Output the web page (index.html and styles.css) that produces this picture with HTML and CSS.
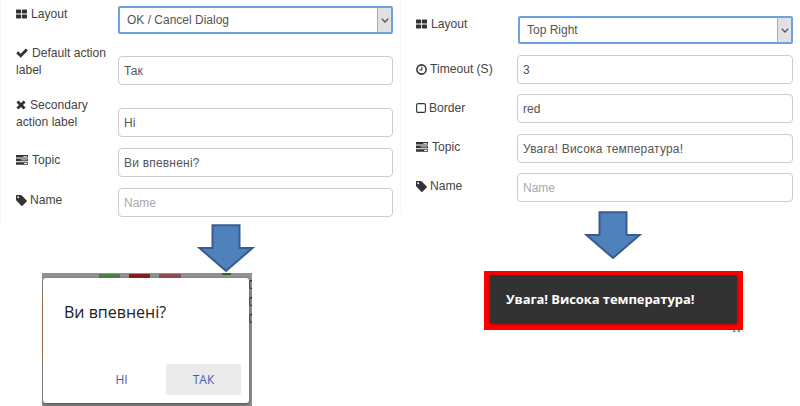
FILE: index.html
```html
<!DOCTYPE html>
<html lang="uk">
<head>
<meta charset="utf-8">
<title>Notification settings</title>
<link rel="stylesheet" href="styles.css">
</head>
<body>
<svg class="defs" aria-hidden="true">
  <symbol id="grid" viewBox="0 0 11 9"><path d="M0 .7Q0 0 .7 0H4.4Q5.1 0 5.1.7V3.4Q5.1 4.1 4.4 4.1H.7Q0 4.1 0 3.4ZM5.9.7Q5.9 0 6.6 0H10.3Q11 0 11 .7V3.4Q11 4.1 10.3 4.1H6.6Q5.9 4.1 5.9 3.4ZM0 5.6Q0 4.9.7 4.9H4.4Q5.1 4.9 5.1 5.6V8.3Q5.1 9 4.4 9H.7Q0 9 0 8.3ZM5.9 5.6Q5.9 4.9 6.6 4.9H10.3Q11 4.9 11 5.6V8.3Q11 9 10.3 9H6.6Q5.9 9 5.9 8.3Z"/></symbol>
  <symbol id="check" viewBox="0 0 11 9"><path d="M.2 4.7 2 2.9 4.3 5.1 9 .4 10.9 2.3 4.3 8.8Z"/></symbol>
  <symbol id="cross" viewBox="0 0 9 9"><path d="M2.2.4 4.5 2.7 6.8.4 8.6 2.2 6.3 4.5 8.6 6.8 6.8 8.6 4.5 6.3 2.2 8.6.4 6.8 2.7 4.5.4 2.2Z"/></symbol>
  <symbol id="tasks" viewBox="0 0 12 10"><path fill-rule="evenodd" d="M0 0H12V2.6H0ZM7.3.9V1.7H11.2V.9ZM0 3.6H12V6.2H0ZM4.8 4.5V5.3H11.2V4.5ZM0 7.2H12V9.8H0ZM8.2 8.1V8.9H11.2V8.1Z"/></symbol>
  <symbol id="tag" viewBox="0 0 10 10"><path fill-rule="evenodd" d="M0 .8Q0 0 .8 0H4.2Q4.8 0 5.3.5L9.7 4.9Q10.2 5.4 9.7 5.9L5.9 9.7Q5.4 10.2 4.9 9.7L.5 5.3Q0 4.8 0 4.2ZM2 1.2A.85.85 0 1 0 2 2.9.85.85 0 1 0 2 1.2Z"/></symbol>
  <symbol id="clock" viewBox="0 0 10 10"><g fill="none" stroke="currentColor" stroke-width="1.4"><circle cx="5" cy="5" r="4.2"/><path d="M5.3 2.5V5.5H3" stroke-width="1"/></g></symbol>
  <symbol id="square" viewBox="0 0 10 10"><rect x=".6" y=".6" width="8.8" height="8.8" rx="1.4" fill="none" stroke="currentColor" stroke-width="1.1"/></symbol>
  <symbol id="arrow" viewBox="0 0 58 49"><path d="M15.5 1.2H42.5V24H55.5L29 47 2.5 24H15.5Z" fill="#4f81bd" stroke="#385d8a" stroke-width="2"/></symbol>
</svg>
<main class="page">
  <section class="panel">
    <div class="form form-left">
      <div class="row"><div class="label"><svg class="w11"><use href="#grid"/></svg>Layout</div><div class="select"><span>OK / Cancel Dialog</span><i><svg viewBox="0 0 8 5"><path d="M.8.8 4 4 7.2.8"/></svg></i></div></div>
      <div class="row tall"><div class="label"><svg class="w12 check"><use href="#check"/></svg>Default action<br>label</div><div class="field">Так</div></div>
      <div class="row tall"><div class="label"><svg class="w10"><use href="#cross"/></svg>Secondary<br>action label</div><div class="field">Ні</div></div>
      <div class="row short"><div class="label"><svg class="w12"><use href="#tasks"/></svg>Topic</div><div class="field cyr">Ви впевнені?</div></div>
      <div class="row short"><div class="label"><svg class="w11 big"><use href="#tag"/></svg>Name</div><div class="field placeholder">Name</div></div>
    </div>
    <svg class="arrow arrow-left"><use href="#arrow"/></svg>
    <div class="backdrop">
      <b class="chip green"></b><b class="chip red"></b><b class="chip pink"></b><b class="chip dot"></b>
      <b class="edge"></b>
      <div class="behind"><span>0</span><span>0</span><span>0</span></div>
      <div class="dialog">
        <div class="title">Ви впевнені?</div>
        <div class="actions"><span class="btn">НІ</span><span class="btn active">ТАК</span></div>
      </div>
    </div>
  </section>
  <section class="panel">
    <div class="form form-right">
      <div class="row"><div class="label"><svg class="w11"><use href="#grid"/></svg>Layout</div><div class="select"><span>Top Right</span><i><svg viewBox="0 0 8 5"><path d="M.8.8 4 4 7.2.8"/></svg></i></div></div>
      <div class="row short"><div class="label"><svg class="w11 big clock"><use href="#clock"/></svg>Timeout (S)</div><div class="field">3</div></div>
      <div class="row short"><div class="label"><svg class="w10 sq"><use href="#square"/></svg>Border</div><div class="field">red</div></div>
      <div class="row short"><div class="label"><svg class="w12"><use href="#tasks"/></svg>Topic</div><div class="field cyr">Увага! Висока температура!</div></div>
      <div class="row short"><div class="label"><svg class="w11 big"><use href="#tag"/></svg>Name</div><div class="field placeholder">Name</div></div>
    </div>
    <svg class="arrow arrow-right"><use href="#arrow"/></svg>
    <div class="alert"><div class="toast">Увага! Висока температура!</div><svg class="speck" viewBox="0 0 7 3"><path d="M1 0V1.6M6 0V1.6M0 2.2H2.4M4.6 2.2H7"/></svg></div>
  </section>
</main>
</body>
</html>
```
FILE: styles.css
```css
* { box-sizing: border-box; }
body { margin: 0; background: #fff; font: 12px/17px "Liberation Sans", Arial, sans-serif; color: #444; }
.defs { position: absolute; width: 0; height: 0; }
.page { display: grid; grid-template-columns: 400px 400px; height: 406px; overflow: hidden; }
.panel { display: flex; flex-direction: column; align-items: flex-start; }
.form { display: grid; width: 100%; }
.form-left { border-left: 1px solid #f7f7f7; padding: 6px 7px 0 15px; grid-template-rows: 39px 52px 51px 39.5px 39.5px; height: 226px; }
.form-right { border-left: 1px solid #f7f7f7; padding: 16px 7px 0 15px; grid-template-rows: 39px 39.3px 39.3px 39.4px 41px; height: 212px; }
.row { display: grid; grid-template-columns: 102px 1fr; align-items: start; }
.form-right .row { grid-template-columns: 101px 1fr; }
.label { white-space: nowrap; font-size: 12.1px; }
.label svg { height: 10px; margin-right: 4px; vertical-align: -1px; fill: currentColor; color: #333; }
.w10 { width: 10px; }
.w11 { width: 11px; }
.w12 { width: 12px; }
.label .big { height: 11px; margin-right: 3px; vertical-align: -2px; }
.label .sq { margin-right: 3px; }
.tall .field { margin-top: 11px; }
.short .label { padding-top: 4px; }
.form-right .short .label { padding-top: 6px; }
.form-right .short:nth-child(n+4) .label { padding-top: 5px; }
.field { height: 29px; border: 1px solid #ccc; border-radius: 4px; padding: 0 5px; line-height: 28px; color: #555; white-space: nowrap; }
.cyr { letter-spacing: .2px; }
.placeholder { color: #aaa; }
.select { display: flex; height: 28px; border: 2px solid #6ea1e4; border-radius: 2px; line-height: 25px; color: #555; }
.form-right .select { margin-left: 1px; }
.select span { flex: 1; padding-left: 7px; }
.select i { width: 14px; background: #e1e1e1; border-left: 1px solid #adadad; display: flex; align-items: center; justify-content: center; }
.select i svg { width: 8px; height: 5px; fill: none; stroke: #555; stroke-width: 1.3; }
.arrow { width: 58px; height: 49px; flex: none; }
.arrow-left { margin: -2px 0 0 197px; position: relative; z-index: 2; }
.arrow-right { margin: -1px 0 0 184px; }
.backdrop { position: relative; width: 210px; height: 133px; margin: 0 0 0 42px; padding: 5px 3px 3px 1px; background: #929292; overflow: hidden; }
.dialog { position: relative; height: 125px; background: #fff; border-radius: 3px; box-shadow: 0 2px 4px #555; padding: 23px 8px 8px 21px; display: flex; flex-direction: column; justify-content: space-between; color: #212121; }
.title { font: 16px/22px "Open Sans", "Noto Sans", sans-serif; white-space: nowrap; }
.actions { display: flex; justify-content: flex-end; font: 12px/31px "Open Sans", "Noto Sans", sans-serif; color: #4b58b4; }
.btn { width: 75px; height: 31px; text-align: center; border-radius: 2px; }
.btn:first-child { margin-right: 7px; }
.active { background: #ebebeb; }
.chip { position: absolute; top: 1px; height: 5px; width: 21px; }
.green { left: 57px; background: #4c8048; }
.red { left: 87px; background: #861b20; }
.pink { left: 117px; width: 22px; background: #914c50; }
.dot { left: 180px; top: 0; width: 9px; height: 2px; background: #246c25; }
.edge { position: absolute; left: 0; top: 20px; width: 1px; height: 69px; background: #bb7941; }
.behind { position: absolute; left: 206px; top: 4px; display: grid; line-height: 17px; font-size: 12px; color: #222; }
.alert { position: relative; width: 259px; height: 59px; margin: 11px 0 0 84px; padding: 4px 6px 7px; background: #f00; }
.toast { height: 48px; border-radius: 2px; background: #323232; box-shadow: 0 1px 3px #800; color: #fff; font: bold 13px/48px "Open Sans", "Noto Sans", sans-serif; letter-spacing: -.08px; padding-left: 16px; white-space: nowrap; }
.speck { position: absolute; left: 249px; top: 58px; width: 7px; height: 3px; fill: none; stroke: #444; }
```
